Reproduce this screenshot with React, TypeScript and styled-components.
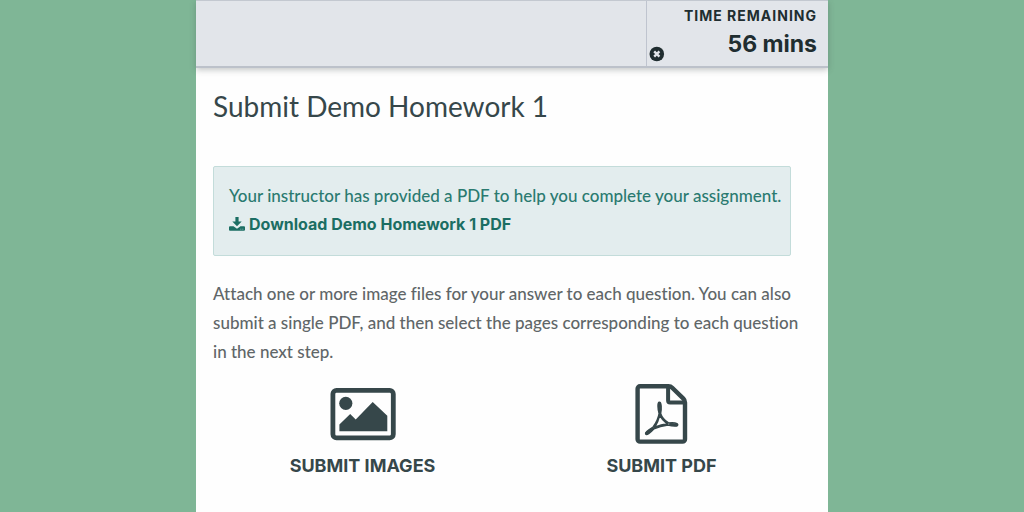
import React from 'react';
import styled, { createGlobalStyle } from 'styled-components';

const GlobalStyle = createGlobalStyle`
  *, *::before, *::after { box-sizing: border-box; }
  body {
    margin: 0;
    background: #7fb696;
    color: #36474a;
    font-family: Inter, "Open Sans", sans-serif;
    font-size: 16px;
    line-height: 29px;
  }
`;

const Panel = styled.div`
  width: 100%;
  max-width: 632px;
  min-height: 100vh;
  margin: 0 auto;
  background: #fefefe;
`;

const TopBar = styled.header`
  display: flex;
  justify-content: flex-end;
  min-height: 68px;
  background: #e2e5ea;
  border-top: 1px solid #c3c8d0;
  border-bottom: 2px solid #bcc1ca;
  box-shadow: 0 2px 6px rgba(60, 70, 70, 0.3);
`;

const Timer = styled.div`
  display: flex;
  align-items: flex-end;
  justify-content: space-between;
  width: 182px;
  padding: 0 11px 4px 2px;
  border-left: 1px solid #bfc4cf;
  color: #202d30;
`;

const CloseButton = styled.button`
  display: flex;
  margin: 0;
  padding: 0;
  border: 0;
  background: none;
  color: inherit;
  cursor: pointer;
`;

const TimerText = styled.div`
  text-align: right;
  font-weight: 700;
`;

const TimerLabel = styled.div`
  font-size: 14px;
  line-height: 20px;
  letter-spacing: 1px;
`;

const TimerValue = styled.div`
  font-size: 23px;
  line-height: 36px;
`;

const Content = styled.main`
  padding: 18px 17px;
`;

const Title = styled.h1`
  margin: 0 0 40px;
  font-family: Lato, sans-serif;
  font-size: 28px;
  font-weight: 400;
  line-height: 40px;
`;

const Notice = styled.section`
  margin: 0 20px 23px 0;
  padding: 14px 0 16px 15px;
  border: 1px solid #c3dcda;
  border-radius: 2px;
  background: #e3edee;
  color: #2a7a70;
`;

const Text = styled.p`
  margin: 0;
  font-family: Lato, sans-serif;
  font-size: 17px;
  font-weight: 500;
  font-variant-ligatures: none;
`;

const DownloadLink = styled.a`
  display: flex;
  align-items: center;
  gap: 4px;
  color: #1b6e63;
  font-weight: 700;
  text-decoration: none;
`;

const Instructions = styled(Text)`
  margin-bottom: 18px;
  color: #606668;
`;

const Choices = styled.div`
  display: grid;
  grid-template-columns: 1fr 1fr;
`;

const Choice = styled.button`
  display: flex;
  flex-direction: column;
  align-items: center;
  gap: 7px;
  padding: 0;
  border: 0;
  background: none;
  color: #36474a;
  font: inherit;
  font-size: 18px;
  font-weight: 700;
  cursor: pointer;
`;

const CloseIcon = () => (
  <svg width="16" height="16" viewBox="0 0 16 16" aria-hidden="true">
    <circle cx="7.8" cy="8" r="7.3" fill="currentColor" />
    <path d="M5.2 5.4l5.2 5.2M10.4 5.4l-5.2 5.2" stroke="#e2e5ea" strokeWidth="2.4" />
  </svg>
);

const DownloadIcon = () => (
  <svg width="16" height="16" viewBox="0 0 16 16" fill="currentColor" aria-hidden="true">
    <path d="M6.4 0h3.2v4.6h3.1L8 9.2 3.3 4.6h3.1z" />
    <path d="M1 9.2h3.5L8 11.8l3.5-2.6H15a1 1 0 0 1 1 1v2.6a1 1 0 0 1-1 1H1a1 1 0 0 1-1-1v-2.6a1 1 0 0 1 1-1z" />
    <path d="M11.4 12.2h.9M13.4 12.2h.9" stroke="#e3edee" strokeWidth=".6" />
  </svg>
);

const ImageIcon = () => (
  <svg width="66" height="60" viewBox="0 0 66 60" fill="currentColor" aria-hidden="true">
    <rect x="2.9" y="6.4" width="60.4" height="47.4" rx="3.6" fill="none" stroke="currentColor" strokeWidth="4.8" />
    <circle cx="15.8" cy="19.3" r="6.6" />
    <path d="M9.4 47.2v-6.6L20.2 30l5.5 5.4L42.7 18l14.6 13.7v15.5z" />
  </svg>
);

const PdfIcon = () => (
  <svg width="54" height="60" viewBox="0 0 54 60" fill="none" stroke="currentColor" aria-hidden="true">
    <path
      d="M5 2.3h28.6c1.4 0 2.6.5 3.6 1.5l11.2 10.9c1 1 1.6 2.4 1.6 3.8v36.7a2.4 2.4 0 0 1-2.4 2.4H5a2.4 2.4 0 0 1-2.4-2.4V4.7A2.4 2.4 0 0 1 5 2.3z"
      strokeWidth="4.4"
    />
    <path d="M33.1 3v13.6a2 2 0 0 0 2 2h14.5" strokeWidth="4" />
    <path
      d="M24.3 18.4c-1.6.1-1.6 6 0 10.8-.6 4.5-3.4 10.3-6.4 14.4-5.2 3-7.9 5-7.2 6.3.9 1.4 4.2-.7 8.2-5.1 4.2-2 9.7-3.3 14.1-3.8 4.8 1.2 9.4 1.5 9.6-.2.1-1.9-4-2.3-9.2-1.8-4-2.7-6.8-6-7.9-9.6 1-5 .8-11.1-1.2-11zM24.6 31.2c-1 4.2-2.6 8.3-5 12 4.2-1.5 8.4-2.7 12.7-3.4-3.4-2.5-6-5.4-7.7-8.6z"
      strokeWidth="1.7"
      strokeLinejoin="round"
    />
    <path d="M11.7 49l5.2-4M24.5 19.5v8M35.5 40.4l6 .4" strokeWidth="2.8" strokeLinecap="round" />
  </svg>
);

export default function App() {
  return (
    <>
      <GlobalStyle />
      <Panel>
        <TopBar>
          <Timer>
            <CloseButton type="button" aria-label="Hide timer">
              <CloseIcon />
            </CloseButton>
            <TimerText>
              <TimerLabel>TIME REMAINING</TimerLabel>
              <TimerValue>56 mins</TimerValue>
            </TimerText>
          </Timer>
        </TopBar>
        <Content>
          <Title>Submit Demo Homework 1</Title>
          <Notice>
            <Text>Your instructor has provided a PDF to help you complete your assignment.</Text>
            <DownloadLink href="#download">
              <DownloadIcon />
              Download Demo Homework 1 PDF
            </DownloadLink>
          </Notice>
          <Instructions>
            Attach one or more image files for your answer to each question. You can also submit a
            single PDF, and then select the pages corresponding to each question in the next step.
          </Instructions>
          <Choices>
            <Choice type="button">
              <ImageIcon />
              SUBMIT IMAGES
            </Choice>
            <Choice type="button">
              <PdfIcon />
              SUBMIT PDF
            </Choice>
          </Choices>
        </Content>
      </Panel>
    </>
  );
}
